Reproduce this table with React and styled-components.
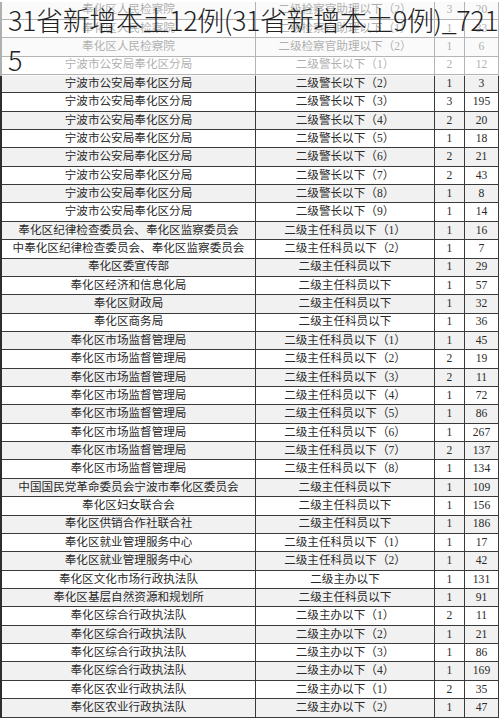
import React from "react";
import styled, { createGlobalStyle } from "styled-components";

const Global = createGlobalStyle`
  html, body { margin: 0; padding: 0; background: #fff; overflow: hidden; }
  #root { width: 500px; height: 719px; }
`;

const Page = styled.div`
  position: relative;
  width: 500px;
  height: 719px;
  overflow: hidden;
  background: #fff;
`;

const Table = styled.div`
  display: flex;
  flex-direction: column;
  width: 499px;
  margin-top: 1.5px;
  border-left: 2px solid #2e2e2e;
  border-right: 1px solid #3a3a3a;
  box-sizing: border-box;
`;

const Row = styled.div`
  display: grid;
  grid-template-columns: 254px 179px 30px 1fr;
  height: 18.37px;
  box-sizing: border-box;
  border-bottom: 1px solid #3a3a3a;
  background: ${(p) => (p.$shade ? "#f1f1f1" : "#ffffff")};
`;

const Cell = styled.div`
  display: flex;
  align-items: center;
  justify-content: center;
  overflow: hidden;
  white-space: nowrap;
  border-right: ${(p) => (p.$last ? "none" : "1px solid #3a3a3a")};
  font-family: "Liberation Serif", "Noto Sans CJK SC", serif;
  font-size: 11.6px;
  color: #2a2a2a;
  line-height: 1;
`;

const Fade = styled.div`
  position: absolute;
  top: 0;
  left: 0;
  right: 0;
  height: 76px;
  background: rgba(255, 255, 255, 0.62);
`;

const Title = styled.div`
  position: absolute;
  top: 0;
  left: 8px;
  width: 492px;
  font-family: "Noto Sans CJK SC", "Noto Sans", sans-serif;
  font-size: 27px;
  font-weight: 300;
  letter-spacing: -0.4px;
  line-height: 40px;
  color: #222222;
  word-break: break-all;
`;

const rows = [
  ["奉化区人民检察院", "二级检察官助理以下（2）", "3", "20"],
  ["奉化区人民检察院", "二级检察官助理以下（1）", "1", "33"],
  ["奉化区人民检察院", "二级检察官助理以下（2）", "1", "6"],
  ["宁波市公安局奉化区分局", "二级警长以下（1）", "2", "12"],
  ["宁波市公安局奉化区分局", "二级警长以下（2）", "1", "3"],
  ["宁波市公安局奉化区分局", "二级警长以下（3）", "3", "195"],
  ["宁波市公安局奉化区分局", "二级警长以下（4）", "2", "20"],
  ["宁波市公安局奉化区分局", "二级警长以下（5）", "1", "18"],
  ["宁波市公安局奉化区分局", "二级警长以下（6）", "2", "21"],
  ["宁波市公安局奉化区分局", "二级警长以下（7）", "2", "43"],
  ["宁波市公安局奉化区分局", "二级警长以下（8）", "1", "8"],
  ["宁波市公安局奉化区分局", "二级警长以下（9）", "1", "14"],
  ["奉化区纪律检查委员会、奉化区监察委员会", "二级主任科员以下（1）", "1", "16"],
  ["中奉化区纪律检查委员会、奉化区监察委员会", "二级主任科员以下（2）", "1", "7"],
  ["奉化区委宣传部", "二级主任科员以下", "1", "29"],
  ["奉化区经济和信息化局", "二级主任科员以下", "1", "57"],
  ["奉化区财政局", "二级主任科员以下", "1", "32"],
  ["奉化区商务局", "二级主任科员以下", "1", "36"],
  ["奉化区市场监督管理局", "二级主任科员以下（1）", "1", "45"],
  ["奉化区市场监督管理局", "二级主任科员以下（2）", "2", "19"],
  ["奉化区市场监督管理局", "二级主任科员以下（3）", "2", "11"],
  ["奉化区市场监督管理局", "二级主任科员以下（4）", "1", "72"],
  ["奉化区市场监督管理局", "二级主任科员以下（5）", "1", "86"],
  ["奉化区市场监督管理局", "二级主任科员以下（6）", "1", "267"],
  ["奉化区市场监督管理局", "二级主任科员以下（7）", "2", "137"],
  ["奉化区市场监督管理局", "二级主任科员以下（8）", "1", "134"],
  ["中国国民党革命委员会宁波市奉化区委员会", "二级主任科员以下", "1", "109"],
  ["奉化区妇女联合会", "二级主任科员以下", "1", "156"],
  ["奉化区供销合作社联合社", "二级主任科员以下", "1", "186"],
  ["奉化区就业管理服务中心", "二级主任科员以下（1）", "1", "17"],
  ["奉化区就业管理服务中心", "二级主任科员以下（2）", "1", "42"],
  ["奉化区文化市场行政执法队", "二级主办以下", "1", "131"],
  ["奉化区基层自然资源和规划所", "二级主任科员以下", "1", "91"],
  ["奉化区综合行政执法队", "二级主办以下（1）", "2", "11"],
  ["奉化区综合行政执法队", "二级主办以下（2）", "1", "21"],
  ["奉化区综合行政执法队", "二级主办以下（3）", "1", "86"],
  ["奉化区综合行政执法队", "二级主办以下（4）", "1", "169"],
  ["奉化区农业行政执法队", "二级主办以下（1）", "2", "35"],
  ["奉化区农业行政执法队", "二级主办以下（2）", "1", "47"],
];

export default function App() {
  return (
    <Page>
      <Global />
      <Table>
        {rows.map((r, i) => (
          <Row key={i} $shade={i % 2 === 0}>
            <Cell>{r[0]}</Cell>
            <Cell>{r[1]}</Cell>
            <Cell>{r[2]}</Cell>
            <Cell $last>{r[3]}</Cell>
          </Row>
        ))}
      </Table>
      <Fade />
      <Title>31省新增本土12例(31省新增本土9例)_7215</Title>
    </Page>
  );
}
